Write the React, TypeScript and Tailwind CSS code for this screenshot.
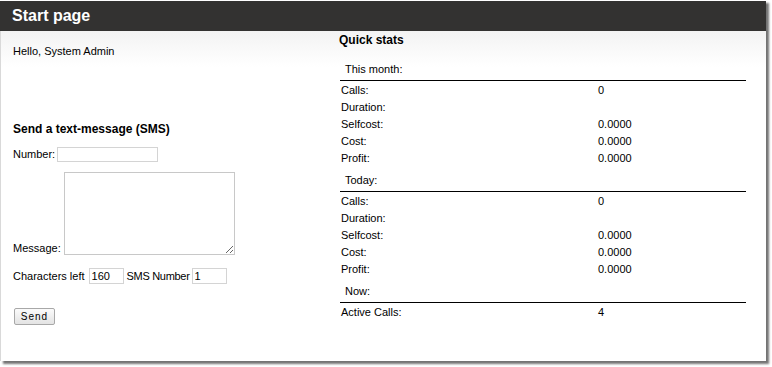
import React from 'react'

const font = { fontFamily: '"Liberation Sans", Arial, sans-serif' }

interface StatRow {
  label: string
  value: string
}

const sections: Array<{ title: string; rows: StatRow[] }> = [
  {
    title: 'This month:',
    rows: [
      { label: 'Calls:', value: '0' },
      { label: 'Duration:', value: '' },
      { label: 'Selfcost:', value: '0.0000' },
      { label: 'Cost:', value: '0.0000' },
      { label: 'Profit:', value: '0.0000' },
    ],
  },
  {
    title: 'Today:',
    rows: [
      { label: 'Calls:', value: '0' },
      { label: 'Duration:', value: '' },
      { label: 'Selfcost:', value: '0.0000' },
      { label: 'Cost:', value: '0.0000' },
      { label: 'Profit:', value: '0.0000' },
    ],
  },
  {
    title: 'Now:',
    rows: [{ label: 'Active Calls:', value: '4' }],
  },
]

export default function App() {
  return (
    <div className="w-[772px] h-[367px] bg-white text-[11px] text-black" style={font}>
      <div className="w-[766px] h-[361px] shadow-[3px_3px_2px_rgba(0,0,0,0.55)] flex flex-col">
        {/* Header */}
        <div className="mt-px h-[30px] bg-[#333231] flex items-center px-3">
          <span className="text-white font-bold text-[16px] leading-none -mt-px">Start page</span>
        </div>

        {/* Body */}
        <div className="flex-1 flex border-l border-[#d9d9d9] bg-gradient-to-b from-[#f3f3f3] to-white bg-no-repeat [background-size:100%_36px]">
          {/* Left column */}
          <div className="w-[337px] pl-3 pt-[14px]">
            <div className="leading-[13px]">Hello, System Admin</div>

            <div className="mt-[64px] font-bold text-[12px] leading-[14px]">Send a text-message (SMS)</div>

            <div className="mt-[10px] flex items-center">
              <span>Number:</span>
              <input className="ml-[2px] w-[101px] h-[15px] border border-[#d4d4d4] bg-white outline-none" />
            </div>

            <div className="mt-[9px] flex items-end">
              <span className="leading-[13px] mb-[-1px]">Message:</span>
              <textarea className="ml-[3px] w-[171px] h-[83px] -mb-px border border-[#c8c8c8] bg-white outline-none resize-y" />
            </div>

            <div className="mt-[14px] flex items-center">
              <span>Characters left</span>
              <input
                className="ml-[4px] w-[35px] h-[16px] border border-[#d4d4d4] bg-white px-[2px] text-[11px] outline-none"
                defaultValue="160"
              />
              <span className="ml-[3px] tracking-[-0.3px]">SMS Number</span>
              <input
                className="ml-[2px] w-[35px] h-[16px] border border-[#d4d4d4] bg-white px-[2px] text-[11px] outline-none"
                defaultValue="1"
              />
            </div>

            <button className="mt-[24px] ml-px w-[41px] h-[17px] border border-[#a8a8a8] rounded-[2px] bg-gradient-to-b from-[#fbfbfb] to-[#e3e3e3] text-[10px] tracking-[1px] leading-none">
              Send
            </button>
          </div>

          {/* Right column: quick stats */}
          <div className="w-[408px] pt-[2px]">
            <div className="font-bold text-[12px] leading-[14px] ml-[1px]">Quick stats</div>
            <div className="mt-[9px]">
              {sections.map((s) => (
                <div key={s.title}>
                  <div className="ml-[2px] h-[25px] border-b border-black pl-[5px] pb-[4px] flex items-end text-[11px] leading-[13px]">
                    {s.title}
                  </div>
                  <div className="ml-[2px] pt-px">
                    {s.rows.map((r) => (
                      <div key={r.label} className="h-[17px] flex items-center">
                        <span className="w-[258px] pl-[1px]">{r.label}</span>
                        <span>{r.value}</span>
                      </div>
                    ))}
                  </div>
                </div>
              ))}
            </div>
          </div>
        </div>
      </div>
    </div>
  )
}
